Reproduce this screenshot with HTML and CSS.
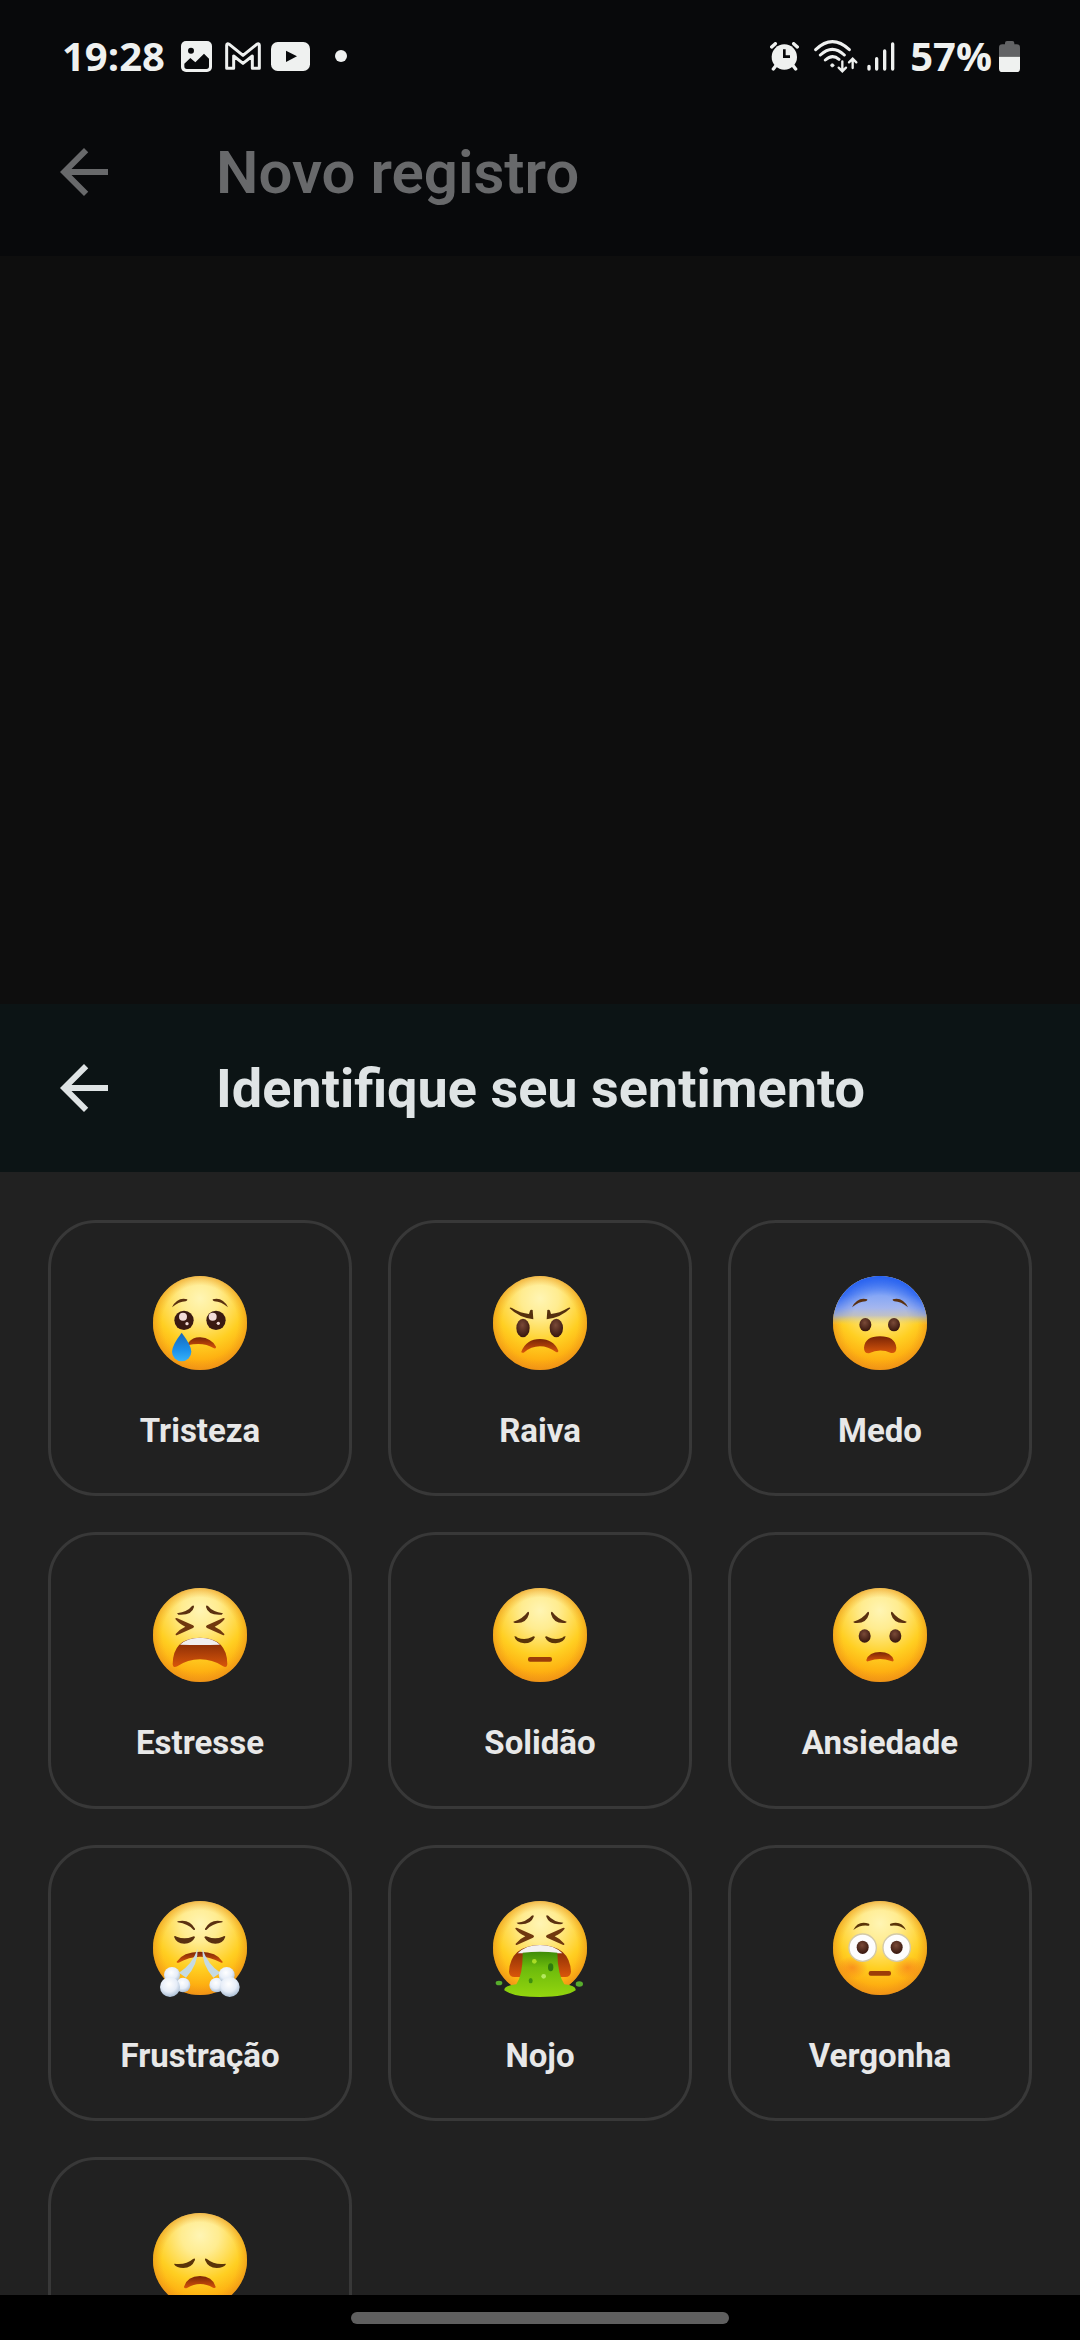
FILE: index.html
```html
<!DOCTYPE html>
<html lang="pt-BR">
<head>
    <meta charset="UTF-8">
    <meta name="viewport" content="width=device-width, initial-scale=1.0">
    <title>Novo registro</title>
    <link rel="stylesheet" href="styles.css">
</head>
<body>

<!-- Shared gradients and face parts -->
<svg class="defs" aria-hidden="true">
    <defs>
        <radialGradient id="skin" cx="0.5" cy="0.24" r="0.8">
            <stop offset="0" stop-color="#fff5b4"/>
            <stop offset="0.25" stop-color="#ffec90"/>
            <stop offset="0.6" stop-color="#ffcf22"/>
            <stop offset="0.8" stop-color="#feb212"/>
            <stop offset="1" stop-color="#f68a0e"/>
        </radialGradient>
        <radialGradient id="rim" cx="0.5" cy="0.5" r="0.5">
            <stop offset="0.8" stop-color="#f0a020" stop-opacity="0"/>
            <stop offset="1" stop-color="#e8921c" stop-opacity="0.55"/>
        </radialGradient>
        <linearGradient id="fear" x1="0" y1="0" x2="0" y2="1">
            <stop offset="0" stop-color="#4a7cf0"/>
            <stop offset="0.2" stop-color="#84a6f6"/>
            <stop offset="0.34" stop-color="#a4b6ee"/>
            <stop offset="0.42" stop-color="#b9bccb" stop-opacity="0.9"/>
            <stop offset="0.52" stop-color="#e6cf60" stop-opacity="0"/>
        </linearGradient>
        <radialGradient id="fearRim" cx="0.5" cy="0.52" r="0.52">
            <stop offset="0.6" stop-color="#2c66f0" stop-opacity="0"/>
            <stop offset="1" stop-color="#2560f0" stop-opacity="0.95"/>
        </radialGradient>
        <linearGradient id="fearFade" x1="0" y1="0" x2="0" y2="1">
            <stop offset="0.2" stop-color="#fff"/>
            <stop offset="0.5" stop-color="#000"/>
        </linearGradient>
        <mask id="fearMask">
            <rect width="282" height="282" fill="url(#fearFade)"/>
        </mask>
        <linearGradient id="mouth" x1="0" y1="0" x2="0" y2="1">
            <stop offset="0" stop-color="#7a2506"/>
            <stop offset="1" stop-color="#d9560a"/>
        </linearGradient>
        <radialGradient id="eye" cx="0.45" cy="0.35" r="0.6">
            <stop offset="0" stop-color="#7a4a38"/>
            <stop offset="1" stop-color="#3c1a10"/>
        </radialGradient>
        <linearGradient id="tear" x1="0" y1="0" x2="0" y2="1">
            <stop offset="0" stop-color="#1767b8"/>
            <stop offset="0.6" stop-color="#1c90ea"/>
            <stop offset="1" stop-color="#39b3f6"/>
        </linearGradient>
        <radialGradient id="steam" cx="0.45" cy="0.35" r="0.65">
            <stop offset="0" stop-color="#ffffff"/>
            <stop offset="0.6" stop-color="#e6edf8"/>
            <stop offset="1" stop-color="#a9bdd4"/>
        </radialGradient>
        <linearGradient id="slime" x1="0" y1="0" x2="0" y2="1">
            <stop offset="0" stop-color="#3f8c08"/>
            <stop offset="0.35" stop-color="#6cba0c"/>
            <stop offset="1" stop-color="#94d60e"/>
        </linearGradient>
        <radialGradient id="blush" cx="0.5" cy="0.5" r="0.5">
            <stop offset="0" stop-color="#f4631e" stop-opacity="0.5"/>
            <stop offset="1" stop-color="#f4631e" stop-opacity="0"/>
        </radialGradient>

        <g id="head">
            <circle cx="141" cy="141" r="141" fill="url(#skin)"/>
            <circle cx="141" cy="141" r="141" fill="url(#rim)"/>
        </g>
        <g id="browsArched" fill="#5a3010">
            <path d="M57 94 Q73 62 103 70 Q104 74 98 76 Q78 76 57 94Z"/>
            <path d="M225 94 Q209 62 179 70 Q178 74 184 76 Q204 76 225 94Z"/>
        </g>
        <g id="browsSad" fill="#5a3010">
            <path d="M61 101 Q88 94 104 72 Q109 70 108 78 Q100 108 66 105 Q61 104 61 101Z"/>
            <path d="M221 101 Q194 94 178 72 Q173 70 174 78 Q182 108 216 105 Q221 104 221 101Z"/>
        </g>
        <g id="lids" fill="#5a3408">
            <path d="M64 145 Q70 145 74 149 Q96 158 117 147 Q122 143 126 147 Q118 166 94 166 Q68 164 64 145Z"/>
            <path d="M218 145 Q212 145 208 149 Q186 158 165 147 Q160 143 156 147 Q164 166 188 166 Q214 164 218 145Z"/>
        </g>
        <g id="squint" fill="#70380f">
            <path d="M67 93 Q67 88 73 91 L120 112 Q126 116 120 120 L73 141 Q67 144 68 138 Q79 124 97 116 Q77 107 67 93Z"/>
            <path d="M215 93 Q215 88 209 91 L162 112 Q156 116 162 120 L209 141 Q215 144 214 138 Q203 124 185 116 Q205 107 215 93Z"/>
        </g>
    </defs>
</svg>

<div class="screen">
    <div class="content">
        <header class="top">
            <div class="status-bar">
                <div class="status-group">
                    <span class="clock">19:28</span>
                    <svg class="icon-image" viewBox="0 0 93 93">
                        <rect width="93" height="93" rx="15" fill="#eff1f0"/>
                        <circle cx="30" cy="29" r="9" fill="#08090b"/>
                        <path d="M10 68 L28 51 L43 64 L69 38 L84 53 V76 Q84 84 76 84 H18 Q10 84 10 76Z" fill="#08090b"/>
                    </svg>
                    <svg class="icon-gmail" viewBox="0 0 108 84">
                        <path d="M5 10 Q5 3 13 7 L54 40 L95 7 Q103 3 103 10 V79 H82 V42 L54 64 L26 42 V79 H5Z" fill="none" stroke="#eff1f0" stroke-width="9" stroke-linejoin="round"/>
                    </svg>
                    <svg class="icon-youtube" viewBox="0 0 117 87">
                        <rect width="117" height="87" rx="20" fill="#eff1f0"/>
                        <path d="M45 26 L78 43 L45 60Z" fill="#08090b"/>
                    </svg>
                    <span class="dot"></span>
                </div>
                <div class="status-group">
                    <svg class="icon-alarm" viewBox="0 0 87 87">
                        <g stroke="#eff1f0" stroke-width="10" stroke-linecap="round">
                            <path d="M5 15 L16 5 M71 5 L82 15 M17 72 L10 81 M70 72 L77 81"/>
                        </g>
                        <circle cx="43" cy="45" r="38" fill="#eff1f0"/>
                        <path d="M43 22 V44 H60" fill="none" stroke="#08090b" stroke-width="8"/>
                    </svg>
                    <svg class="icon-wifi" viewBox="0 0 132 99" fill="none" stroke="#eff1f0" stroke-width="9" stroke-linecap="round">
                        <path d="M5 29 Q55 -19 106 29 M19 45 Q55 11 91 45 M34 60 Q55 41 75 58"/>
                        <circle cx="55" cy="76" r="5" fill="#eff1f0" stroke-width="2"/>
                        <path d="M85 64 V92 M74 83 L85 94 L96 83 M116 84 V57 M105 67 L116 56 L127 67" stroke-width="7"/>
                    </svg>
                    <svg class="icon-signal" viewBox="0 0 84 87" stroke="#eff1f0" stroke-width="10" stroke-linecap="round">
                        <path d="M6 73 V81 M29 50 V81 M53 27 V81 M77 6 V81"/>
                    </svg>
                    <span class="battery-level">57%</span>
                    <svg class="icon-battery" viewBox="0 0 63 93">
                        <path d="M18 6 Q18 0 24 0 H40 Q46 0 46 6 V10 H53 Q63 10 63 20 V47 H0 V20 Q0 10 10 10 H18Z" fill="#626365"/>
                        <path d="M0 47 H63 V83 Q63 93 53 93 H10 Q0 93 0 83Z" fill="#eff1f0"/>
                    </svg>
                </div>
            </div>
            <div class="app-bar app-bar-dimmed">
                <button class="back" aria-label="Voltar">
                    <svg viewBox="0 0 24 24"><path d="M20 11H7.83l5.59-5.59L12 4l-8 8 8 8 1.41-1.41L7.83 13H20v-2z"/></svg>
                </button>
                <h1>Novo registro</h1>
            </div>
        </header>

        <main class="page"></main>

        <section class="sheet">
            <div class="app-bar sheet-bar">
                <button class="back" aria-label="Fechar">
                    <svg viewBox="0 0 24 24"><path d="M20 11H7.83l5.59-5.59L12 4l-8 8 8 8 1.41-1.41L7.83 13H20v-2z"/></svg>
                </button>
                <h2>Identifique seu sentimento</h2>
            </div>

            <div class="feelings">
                <button class="card">
                    <svg class="emoji" viewBox="0 0 282 282">
                        <use href="#head"/>
                        <use href="#browsArched"/>
                        <circle cx="93" cy="133" r="29" fill="#3a1a12"/>
                        <circle cx="189" cy="133" r="29" fill="#3a1a12"/>
                        <g fill="#f3dcd8">
                            <circle cx="90" cy="122" r="12"/>
                            <circle cx="102" cy="143" r="5"/>
                            <circle cx="179" cy="122" r="12"/>
                            <circle cx="196" cy="142" r="5"/>
                        </g>
                        <path d="M106 200 Q120 183 142 184 Q174 186 189 212 Q190 219 183 217 Q150 196 104 208Z" fill="url(#mouth)"/>
                        <path d="M86 170 Q115 208 115 227 A29 29 0 0 1 57 227 Q57 208 86 170Z" fill="url(#tear)"/>
                    </svg>
                    <span>Tristeza</span>
                </button>
                <button class="card">
                    <svg class="emoji" viewBox="0 0 282 282">
                        <use href="#head"/>
                        <g fill="#54300e">
                            <path d="M50 97 Q51 92 57 96 Q83 112 108 114 L111 104 Q113 99 119 102 L121 130 Q78 125 50 97Z"/>
                            <path d="M232 97 Q231 92 225 96 Q199 112 174 114 L171 104 Q169 99 163 102 L161 130 Q204 125 232 97Z"/>
                        </g>
                        <ellipse cx="90" cy="156" rx="20" ry="28" fill="url(#eye)"/>
                        <ellipse cx="190" cy="156" rx="20" ry="28" fill="url(#eye)"/>
                        <path d="M85 227 Q100 189 141 189 Q181 189 196 224 Q196 231 189 228 Q165 211 141 211 Q115 211 92 230 Q84 231 85 227Z" fill="url(#mouth)"/>
                    </svg>
                    <span>Raiva</span>
                </button>
                <button class="card">
                    <svg class="emoji" viewBox="0 0 282 282">
                        <use href="#head"/>
                        <circle cx="141" cy="141" r="141" fill="url(#fear)"/>
                        <circle cx="141" cy="141" r="141" fill="url(#fearRim)" mask="url(#fearMask)"/>
                        <use href="#browsArched"/>
                        <ellipse cx="97" cy="146" rx="18" ry="20" fill="url(#eye)"/>
                        <ellipse cx="183" cy="146" rx="18" ry="20" fill="url(#eye)"/>
                        <path d="M93 215 Q96 181 141 181 Q186 181 190 215 Q190 233 174 231 Q141 216 108 232 Q93 233 93 215Z" fill="url(#mouth)"/>
                    </svg>
                    <span>Medo</span>
                </button>
                <button class="card">
                    <svg class="emoji" viewBox="0 0 282 282">
                        <use href="#head"/>
                        <g fill="#5a3010">
                            <path d="M72 76 Q104 71 117 54 Q123 50 123 57 Q117 83 76 80Z"/>
                            <path d="M210 76 Q178 71 165 54 Q159 50 159 57 Q165 83 206 80Z"/>
                        </g>
                        <use href="#squint"/>
                        <path d="M59 228 Q60 150 141 149 Q222 150 223 228 Q222 242 209 234 Q178 214 141 214 Q104 214 73 235 Q60 242 59 228Z" fill="url(#mouth)"/>
                        <path d="M81 170 Q103 149 141 149 Q179 149 201 170 Q141 172 81 170Z" fill="#f1eff0"/>
                    </svg>
                    <span>Estresse</span>
                </button>
                <button class="card">
                    <svg class="emoji" viewBox="0 0 282 282">
                        <use href="#head"/>
                        <use href="#browsSad"/>
                        <use href="#lids"/>
                        <rect x="105" y="207" width="72" height="14" rx="6" fill="#9c3d08"/>
                    </svg>
                    <span>Solidão</span>
                </button>
                <button class="card">
                    <svg class="emoji" viewBox="0 0 282 282">
                        <use href="#head"/>
                        <use href="#browsSad"/>
                        <ellipse cx="95" cy="144" rx="18" ry="20" fill="url(#eye)"/>
                        <ellipse cx="187" cy="144" rx="18" ry="20" fill="url(#eye)"/>
                        <path d="M100 216 Q108 192 141 192 Q174 192 182 216 Q182 223 174 219 Q141 207 108 219 Q100 223 100 216Z" fill="url(#mouth)"/>
                    </svg>
                    <span>Ansiedade</span>
                </button>
                <button class="card">
                    <svg class="emoji" viewBox="0 0 282 282">
                        <use href="#head"/>
                        <g fill="#5a3010">
                            <path d="M73 61 Q109 52 126 83 Q127 89 121 86 Q106 69 74 64Z"/>
                            <path d="M209 61 Q173 52 156 83 Q155 89 161 86 Q176 69 208 64Z"/>
                            <path d="M63 107 Q65 103 71 107 Q95 117 118 107 Q125 104 126 109 Q117 128 94 128 Q70 127 63 107Z"/>
                            <path d="M217 107 Q215 103 209 107 Q186 117 164 107 Q156 104 154 109 Q164 128 187 128 Q211 127 217 107Z"/>
                        </g>
                        <path d="M71 182 Q90 152 141 152 Q191 152 209 182 Q209 188 202 184 Q172 167 141 167 Q108 167 77 185 Q71 187 71 182Z" fill="url(#mouth)"/>
                        <path d="M134 143 Q136 190 99 230 L78 215 Q118 190 134 143Z" fill="#c6dae2"/>
                        <path d="M148 143 Q146 190 181 230 L202 215 Q164 190 148 143Z" fill="#c6dae2"/>
                        <g fill="url(#steam)">
                            <circle cx="90" cy="252" r="22"/>
                            <circle cx="57" cy="222" r="24"/>
                            <circle cx="51" cy="258" r="30"/>
                            <circle cx="191" cy="252" r="22"/>
                            <circle cx="221" cy="222" r="24"/>
                            <circle cx="230" cy="258" r="30"/>
                        </g>
                    </svg>
                    <span>Frustração</span>
                </button>
                <button class="card">
                    <svg class="emoji" viewBox="0 0 282 282">
                        <use href="#head"/>
                        <g fill="#5a3010">
                            <path d="M71 65 Q101 62 116 44 Q123 40 122 47 Q113 73 75 69Z"/>
                            <path d="M211 65 Q181 62 166 44 Q159 40 160 47 Q169 73 207 69Z"/>
                        </g>
                        <use href="#squint" y="-10"/>
                        <path d="M48 212 Q52 134 141 132 Q230 134 234 212 Q232 230 214 228 L68 228 Q49 230 48 212Z" fill="url(#mouth)"/>
                        <path d="M74 157 Q98 132 141 132 Q184 132 208 157Z" fill="#f3f1f0"/>
                        <path d="M89 155 Q141 150 193 155 Q194 220 214 250 Q250 254 248 268 Q220 288 141 288 Q62 288 34 268 Q32 254 70 250 Q90 220 89 155Z" fill="url(#slime)"/>
                        <ellipse cx="18" cy="246" rx="10" ry="7" fill="#57ad2d"/>
                        <ellipse cx="259" cy="249" rx="11" ry="8" fill="#57ad2d"/>
                        <ellipse cx="173" cy="199" rx="8" ry="12" fill="#2f7a0d"/>
                        <ellipse cx="113" cy="239" rx="6" ry="8" fill="#3f8f0e"/>
                        <circle cx="124" cy="181" r="7" fill="#a8dc25"/>
                        <circle cx="152" cy="226" r="7" fill="#b4e860"/>
                    </svg>
                    <span>Nojo</span>
                </button>
                <button class="card">
                    <svg class="emoji" viewBox="0 0 282 282">
                        <use href="#head"/>
                        <g fill="#5a3408">
                            <path d="M61 87 Q75 57 108 68 Q112 74 104 74 Q82 71 61 87Z"/>
                            <path d="M219 87 Q205 57 172 68 Q168 74 176 74 Q198 71 219 87Z"/>
                        </g>
                        <ellipse cx="58" cy="200" rx="46" ry="34" fill="url(#blush)"/>
                        <ellipse cx="224" cy="200" rx="46" ry="34" fill="url(#blush)"/>
                        <g fill="#fdfdfd" stroke="#d3c9a8" stroke-width="4">
                            <circle cx="89" cy="140" r="41"/>
                            <circle cx="191" cy="140" r="41"/>
                        </g>
                        <ellipse cx="89" cy="139" rx="18" ry="20" fill="url(#eye)"/>
                        <ellipse cx="191" cy="139" rx="18" ry="20" fill="url(#eye)"/>
                        <rect x="107" y="210" width="67" height="14" rx="6" fill="#9c3d08"/>
                    </svg>
                    <span>Vergonha</span>
                </button>
                <button class="card" aria-label="Decepção">
                    <svg class="emoji" viewBox="0 0 282 282">
                        <use href="#head"/>
                        <g fill="#5a3408">
                            <path d="M64 152 Q98 157 120 138 Q127 134 126 141 Q116 165 91 165 Q70 164 64 155Z"/>
                            <path d="M218 152 Q184 157 162 138 Q155 134 156 141 Q166 165 191 165 Q212 164 218 155Z"/>
                        </g>
                        <path d="M93 221 Q103 189 141 189 Q178 189 188 221 Q188 227 180 224 Q141 201 102 225 Q93 228 93 221Z" fill="url(#mouth)"/>
                    </svg>
                </button>
            </div>
        </section>
    </div>

    <nav class="gesture-bar">
        <span class="pill"></span>
    </nav>
</div>

</body>
</html>
```
FILE: styles.css
```css
* {
    box-sizing: border-box;
}

body {
    margin: 0;
    background-color: #000;
    font-family: Roboto, "Liberation Sans", sans-serif;
}

h1, h2 {
    margin: 0;
    font-weight: 600;
}

button {
    padding: 0;
    border: none;
    background: none;
    color: inherit;
    font-family: inherit;
    cursor: pointer;
}

svg {
    display: block;
    flex-shrink: 0;
}

.defs {
    position: absolute;
    width: 0;
    height: 0;
}

.screen {
    display: flex;
    flex-direction: column;
    height: 100vh;
}

.content {
    display: flex;
    flex: 1;
    flex-direction: column;
    min-height: 0;
    background-color: #0e0e0e;
}

/* Status bar */
.top {
    background-color: #08090b;
}

.status-bar {
    display: flex;
    justify-content: space-between;
    height: 88px;
    padding: 25px 60px 0 62px;
    color: #eff1f0;
    font-family: "Open Sans", sans-serif;
    font-size: 40px;
    font-weight: 700;
    line-height: 62px;
}

.status-group {
    display: flex;
    align-items: center;
    height: 62px;
}

.icon-image { width: 31px; height: 31px; margin-left: 16px; }
.icon-gmail { width: 36px; height: 28px; margin-left: 13px; }
.icon-youtube { width: 39px; height: 29px; margin-left: 10px; }
.icon-alarm { width: 29px; height: 29px; }
.icon-wifi { width: 44px; height: 33px; margin-left: 15px; }
.icon-signal { width: 28px; height: 29px; margin-left: 9px; }
.icon-battery { width: 21px; height: 31px; margin-left: 7px; }

.battery-level {
    margin-left: 15px;
}

.dot {
    width: 12px;
    height: 12px;
    margin-left: 25px;
    border-radius: 50%;
    background-color: #eff1f0;
}

/* App bars */
.app-bar {
    display: flex;
    align-items: center;
    flex-shrink: 0;
    gap: 96px;
    height: 168px;
    padding: 0 48px;
}

.app-bar-dimmed {
    color: #68696b;
}

.app-bar h1 { font-size: 60px; }
.app-bar h2 { font-size: 54px; font-weight: 700; }

.back svg {
    width: 72px;
    height: 72px;
    fill: currentColor;
}

.page {
    flex: 1;
}

/* Bottom sheet */
.sheet {
    display: flex;
    flex-direction: column;
    height: 56.25%;
    background-color: #212121;
}

.sheet-bar {
    background-color: #0c1415;
    color: #dfe4e5;
}

.feelings {
    display: grid;
    grid-template-columns: repeat(3, 1fr);
    align-content: start;
    flex: 1;
    gap: 36px;
    min-height: 0;
    padding: 48px;
    overflow-y: auto;
    scrollbar-width: none;
}

.card {
    display: flex;
    flex-direction: column;
    align-items: center;
    gap: 41px;
    aspect-ratio: 1.1;
    padding-top: 53px;
    border: 3px solid #383838;
    border-radius: 48px;
    color: #e8e8e8;
    font-size: 33px;
    font-weight: 700;
    line-height: 40px;
}

.emoji {
    width: 94px;
    height: 94px;
    overflow: visible;
}

/* Gesture bar */
.gesture-bar {
    display: flex;
    align-items: center;
    justify-content: center;
    flex-shrink: 0;
    height: 45px;
}

.pill {
    width: 35%;
    height: 12px;
    border-radius: 6px;
    background-color: #5f5f5f;
}
```
